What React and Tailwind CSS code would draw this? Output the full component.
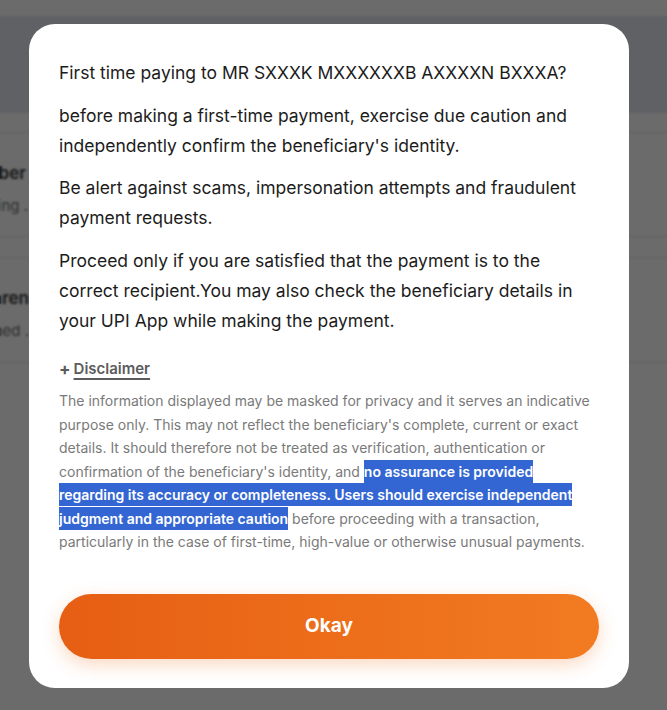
import React from 'react';

const font = { fontFamily: 'Inter, "Noto Sans", sans-serif' };

const BackgroundPage = () => {
    return (
        <div className="min-h-[710px] bg-white" style={font}>
            <div className="h-[17px] border-b border-[#e6e6e6] bg-white" />
            <div className="h-[96px] bg-[#e2e7f0]" />
            <div className="h-[20px] border-b border-[#e4e4e4]" />
            <div className="h-[104px] border-b border-[#e4e4e4] pt-[28px]">
                <div className="flex w-[26px] justify-end overflow-hidden whitespace-nowrap">
                    <p className="text-[17px] font-semibold text-[#3a3a3a]">Account Number</p>
                </div>
                <div className="mt-[8px] flex w-[28px] justify-end overflow-hidden whitespace-nowrap">
                    <p className="text-[15px] text-[#6f6f6f]">Verifying .</p>
                </div>
            </div>
            <div className="h-[21px] border-b border-[#e4e4e4]" />
            <div className="h-[105px] border-b border-[#e4e4e4] pt-[28px]">
                <div className="flex w-[29px] justify-end overflow-hidden whitespace-nowrap">
                    <p className="text-[17px] font-semibold text-[#3a3a3a]">Transparen</p>
                </div>
                <div className="mt-[8px] flex w-[29px] justify-end overflow-hidden whitespace-nowrap">
                    <p className="text-[15px] text-[#6f6f6f]">Confirmed .</p>
                </div>
            </div>
        </div>
    );
};

const App = () => {
    return (
        <div className="relative h-[710px] w-full overflow-hidden">
            <BackgroundPage />
            <div className="absolute inset-0 bg-black/[0.58] backdrop-blur-[1px]" />
            <div className="absolute left-[29px] top-[24px] w-[600px] rounded-[26px] bg-white px-[30px] pb-[29px] pt-[34px]" style={font}>
                <div className="text-[17.5px] leading-[30px] text-[#1c1c1c]">
                    <p>First time paying to MR SXXXK MXXXXXXB AXXXXN BXXXA?</p>
                    <p className="mt-[13px]">before making a first-time payment, exercise due caution and independently confirm the beneficiary's identity.</p>
                    <p className="mt-[12px]">Be alert against scams, impersonation attempts and fraudulent payment requests.</p>
                    <p className="mt-[13px]">Proceed only if you are satisfied that the payment is to the correct recipient.You may also check the beneficiary details in your UPI App while making the payment.</p>
                </div>

                <div className="mt-[23px] flex items-center gap-[3px] text-[15px] font-semibold leading-[20px] text-[#5c5c5c]">
                    <span className="text-[17px] font-bold">+</span>
                    <span className="underline decoration-[1.5px] underline-offset-[4px]">Disclaimer</span>
                </div>

                <p className="mt-[10px] text-[14px] leading-[23.5px] text-[#7a7a7a]">
                    The information displayed may be masked for privacy and it serves an indicative purpose only. This may not reflect the beneficiary's complete, current or exact details. It should therefore not be treated as verification, authentication or confirmation of the beneficiary's identity, and{' '}
                    <span className="bg-[#3366d3] py-[3px] font-semibold text-white [box-decoration-break:clone]">
                        no assurance is provided regarding its accuracy or completeness. Users should exercise independent judgment and appropriate caution
                    </span>{' '}
                    before proceeding with a transaction, particularly in the case of first-time, high-value or otherwise unusual payments.
                </p>

                <button className="mt-[40px] flex h-[65px] w-full items-center justify-center rounded-full bg-gradient-to-r from-[#e65e13] to-[#f27b21] text-[19px] font-bold text-white shadow-[0_6px_18px_rgba(240,120,40,0.28)]">
                    Okay
                </button>
            </div>
        </div>
    );
};

export default App;
